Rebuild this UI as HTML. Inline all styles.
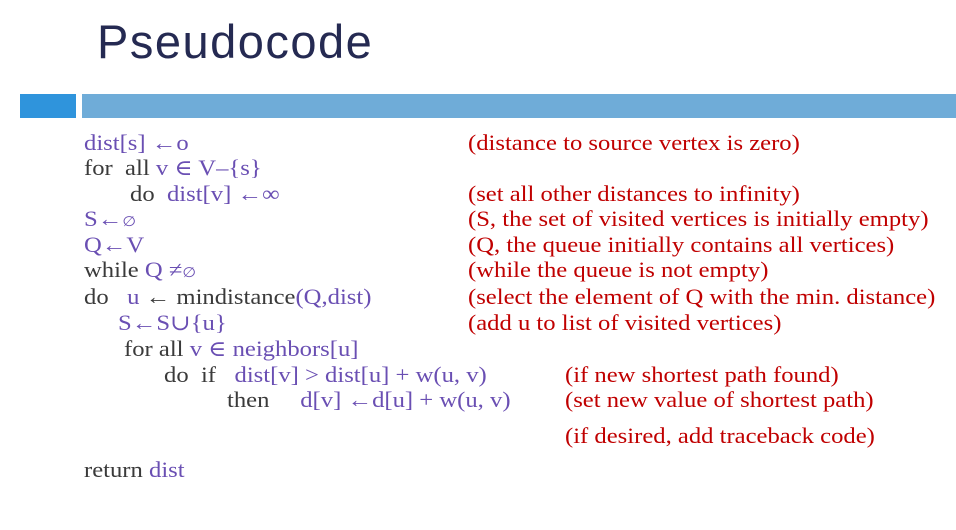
<!DOCTYPE html>
<html><head><meta charset="utf-8"><style>
body{margin:0;width:956px;height:530px;background:#fff;overflow:hidden;position:relative;font-family:"Liberation Serif","DejaVu Serif",serif;}
.t{position:absolute;left:97px;top:14px;font-family:"Liberation Sans","DejaVu Sans",sans-serif;font-size:47px;color:#252a52;letter-spacing:1.5px}
.b1{position:absolute;left:20px;top:94px;width:56px;height:24px;background:#2f94dc}
.b2{position:absolute;left:82px;top:94px;width:874px;height:24px;background:#6facd8}
.l{position:absolute;font-size:22px;color:#3a3a3a;white-space:pre;line-height:24px;transform:scaleX(1.12);transform-origin:0 50%}
.p{color:#6a4fb3}
.r{color:#c00000}
</style></head><body>
<div class="t">Pseudocode</div>
<div class="b1"></div><div class="b2"></div>
<div class="l p" style="left:84px;top:131px">dist[s] ←o</div>
<div class="l" style="left:84px;top:156px">for  all <span class="p">v ∈ V–{s}</span></div>
<div class="l" style="left:130px;top:182px">do  <span class="p">dist[v] ←∞</span></div>
<div class="l p" style="left:84px;top:207px">S←<span style="font-size:14px">∅</span></div>
<div class="l p" style="left:84px;top:233px">Q←V</div>
<div class="l" style="left:84px;top:258px">while <span class="p">Q ≠<span style="font-size:14px">∅</span></span></div>
<div class="l" style="left:84px;top:285px">do   <span class="p">u</span> ← mindistance<span class="p">(Q,dist)</span></div>
<div class="l p" style="left:118px;top:311px">S←S∪{u}</div>
<div class="l" style="left:124px;top:337px">for all <span class="p">v ∈ neighbors[u]</span></div>
<div class="l" style="left:164px;top:363px">do  if   <span class="p">dist[v] &gt; dist[u] + w(u, v)</span></div>
<div class="l" style="left:227px;top:388px">then     <span class="p">d[v] ←d[u] + w(u, v)</span></div>
<div class="l" style="left:84px;top:458px">return <span class="p">dist</span></div>
<div class="l r" style="left:468px;top:131px">(distance to source vertex is zero)</div>
<div class="l r" style="left:468px;top:182px">(set all other distances to infinity)</div>
<div class="l r" style="left:468px;top:207px">(S, the set of visited vertices is initially empty)</div>
<div class="l r" style="left:468px;top:233px">(Q, the queue initially contains all vertices)</div>
<div class="l r" style="left:468px;top:258px">(while the queue is not empty)</div>
<div class="l r" style="left:468px;top:285px">(select the element of Q with the min. distance)</div>
<div class="l r" style="left:468px;top:311px">(add u to list of visited vertices)</div>
<div class="l r" style="left:565px;top:363px">(if new shortest path found)</div>
<div class="l r" style="left:565px;top:388px">(set new value of shortest path)</div>
<div class="l r" style="left:565px;top:424px">(if desired, add traceback code)</div>
</body></html>
